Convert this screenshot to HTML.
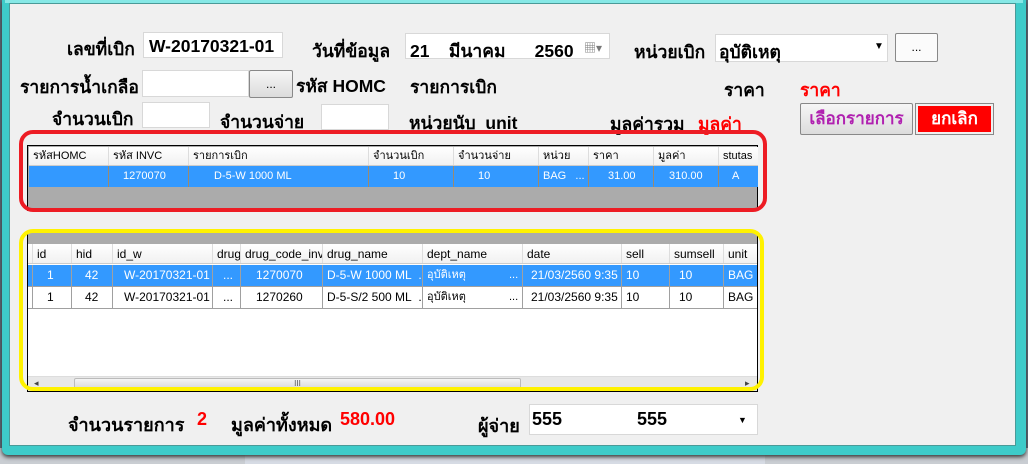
<!DOCTYPE html>
<html><head><meta charset="utf-8"><style>
*{margin:0;padding:0;box-sizing:border-box}
body{width:1028px;height:464px;overflow:hidden;background:#5a6b78;position:relative;font-family:"Liberation Sans","Noto Sans CJK SC",sans-serif}
.a{position:absolute;white-space:nowrap}
.th{font-family:"Liberation Sans","Noto Sans CJK SC",sans-serif;font-weight:bold;font-size:17.5px;color:#000}
.box{position:absolute;background:#fff;border:1px solid #d8d8d8}
.btn{position:absolute;border:1px solid #888;border-radius:2px;background:linear-gradient(#f6f6f6,#dcdcdc);text-align:center;font-size:12px}
.g{font-size:11px;color:#000}
.cell{position:absolute;top:0;height:100%;border-right:1px solid #a0a0a0;padding-left:4px;line-height:20px;overflow:hidden;white-space:nowrap}
</style></head><body>
<div class="a" style="left:0;top:448px;width:1028px;height:16px;background:#c9cdd2"></div>
<div class="a" style="left:245px;top:448px;width:520px;height:16px;background:#d6dbe4"></div>
<div class="a" style="left:2px;top:0;width:1024px;height:455px;background:#3ecbc9;border-radius:0 0 6px 6px;box-shadow:0 2px 4px #333"></div>
<div class="a" style="left:5px;top:0;width:1018px;height:3px;background:#86e8e6"></div>
<div class="a" style="left:9px;top:3px;width:1007px;height:443px;background:#f0f0f0;border:1px solid #4a9a98"></div>

<div class="a th" style="left:67px;top:35px">เลขที่เบิก</div>
<div class="box" style="left:143px;top:32px;width:140px;height:26px"><span class="a th" style="left:5px;top:3px">W-20170321-01</span></div>
<div class="a th" style="left:312px;top:37px">วันที่ข้อมูล</div>
<div class="box" style="left:405px;top:33px;width:205px;height:26px"><span class="a th" style="left:4px;top:3px">21&nbsp;&nbsp;&nbsp; มีนาคม&nbsp;&nbsp;&nbsp;&nbsp;&nbsp; 2560</span><span class="a" style="left:178px;top:5px;font-size:12px;color:#777">▦▾</span></div>
<div class="a th" style="left:634px;top:38px">หน่วยเบิก</div>
<div class="box" style="left:715px;top:34px;width:173px;height:28px"><span class="a th" style="left:3px;top:3px">อุบัติเหตุ</span><span class="a" style="left:158px;top:6px;font-size:10px">▼</span></div>
<div class="btn" style="left:895px;top:33px;width:43px;height:29px;line-height:26px;background:#fbfbfb">...</div>

<div class="a th" style="left:20px;top:73px">รายการน้ำเกลือ</div>
<div class="box" style="left:142px;top:70px;width:107px;height:27px"></div>
<div class="btn" style="left:249px;top:70px;width:44px;height:28px;line-height:26px">...</div>
<div class="a th" style="left:296px;top:72px">รหัส HOMC</div>
<div class="a th" style="left:410px;top:73px">รายการเบิก</div>
<div class="a th" style="left:724px;top:76px">ราคา</div>
<div class="a th" style="left:800px;top:76px;color:#f00">ราคา</div>

<div class="a th" style="left:52px;top:105px">จำนวนเบิก</div>
<div class="box" style="left:142px;top:102px;width:68px;height:26px"></div>
<div class="a th" style="left:220px;top:108px">จำนวนจ่าย</div>
<div class="box" style="left:321px;top:104px;width:68px;height:26px"></div>
<div class="a th" style="left:409px;top:109px">หน่วยนับ&nbsp; unit</div>
<div class="a th" style="left:610px;top:110px">มูลค่ารวม</div>
<div class="a th" style="left:698px;top:110px;color:#f00">มูลค่า</div>
<div class="btn" style="left:800px;top:103px;width:113px;height:32px;line-height:30px;font-size:17px;font-weight:bold;color:#b021b0">เลือกรายการ</div>
<div class="a" style="left:915px;top:103px;width:79px;height:32px;border:1px solid #888;padding:2px;background:#f0f0f0"><div style="background:#f00;color:#fff;height:100%;text-align:center;font-weight:bold;font-size:17px;line-height:26px">ยกเลิก</div></div>

<!-- grid1 -->
<div class="a" style="left:27px;top:145px;width:731px;height:66px;border:1px solid #000;background:#ababab">
 <div class="a g" style="left:1px;top:1px;width:729px;height:19px;background:linear-gradient(#fff,#f1f1f1);border-bottom:1px solid #ccc">
  <div class="cell" style="left:0;width:80px;line-height:18px;border-color:#ddd">รหัสHOMC</div>
  <div class="cell" style="left:80px;width:80px;line-height:18px;border-color:#ddd">รหัส INVC</div>
  <div class="cell" style="left:160px;width:180px;line-height:18px;border-color:#ddd">รายการเบิก</div>
  <div class="cell" style="left:340px;width:85px;line-height:18px;border-color:#ddd">จำนวนเบิก</div>
  <div class="cell" style="left:425px;width:85px;line-height:18px;border-color:#ddd">จำนวนจ่าย</div>
  <div class="cell" style="left:510px;width:50px;line-height:18px;border-color:#ddd">หน่วย</div>
  <div class="cell" style="left:560px;width:65px;line-height:18px;border-color:#ddd">ราคา</div>
  <div class="cell" style="left:625px;width:65px;line-height:18px;border-color:#ddd">มูลค่า</div>
  <div class="cell" style="left:690px;width:39px;line-height:18px;border:none">stutas</div>
 </div>
 <div class="a g" style="left:1px;top:20px;width:729px;height:21px;background:#3399ff;color:#fff">
  <div class="cell" style="left:0;width:80px;border-color:#9a8a70"></div>
  <div class="cell" style="left:80px;width:80px;padding-left:14px;border-color:#9a8a70">1270070</div>
  <div class="cell" style="left:160px;width:180px;padding-left:25px;border-color:#9a8a70">D-5-W 1000 ML</div>
  <div class="cell" style="left:340px;width:85px;padding-left:24px;border-color:#9a8a70">10</div>
  <div class="cell" style="left:425px;width:85px;padding-left:24px;border-color:#9a8a70">10</div>
  <div class="cell" style="left:510px;width:50px;border-color:#9a8a70">BAG&nbsp;&nbsp; ...</div>
  <div class="cell" style="left:560px;width:65px;padding-left:19px;border-color:#9a8a70">31.00</div>
  <div class="cell" style="left:625px;width:65px;padding-left:15px;border-color:#9a8a70">310.00</div>
  <div class="cell" style="left:690px;width:39px;padding-left:13px;border:none">A</div>
 </div>
</div>
<div class="a" style="left:19px;top:130px;width:748px;height:82px;border:4px solid #ed1c24;border-radius:14px"></div>

<!-- grid2 -->
<div class="a" style="left:27px;top:232px;width:731px;height:160px;border:1px solid #000;background:#fff">
 <div class="a" style="left:0;top:0;width:729px;height:11px;background:#ababab"></div>
 <div class="a g" style="left:0;top:11px;width:729px;height:20px;background:linear-gradient(#fff,#f1f1f1);border-bottom:1px solid #ccc;font-size:12px">
  <div class="cell" style="left:0;width:5px;border-color:#ddd"></div>
  <div class="cell" style="left:5px;width:39px;border-color:#ddd">id</div>
  <div class="cell" style="left:44px;width:41px;border-color:#ddd">hid</div>
  <div class="cell" style="left:85px;width:100px;border-color:#ddd">id_w</div>
  <div class="cell" style="left:185px;width:28px;border-color:#ddd">drug</div>
  <div class="cell" style="left:213px;width:82px;border-color:#ddd">drug_code_invc</div>
  <div class="cell" style="left:295px;width:100px;border-color:#ddd">drug_name</div>
  <div class="cell" style="left:395px;width:100px;border-color:#ddd">dept_name</div>
  <div class="cell" style="left:495px;width:99px;border-color:#ddd">date</div>
  <div class="cell" style="left:594px;width:48px;border-color:#ddd">sell</div>
  <div class="cell" style="left:642px;width:54px;border-color:#ddd">sumsell</div>
  <div class="cell" style="left:696px;width:33px;border:none">unit</div>
 </div>
 <div class="a g" style="left:0;top:32px;width:729px;height:22px;background:#3399ff;color:#fff;border-bottom:1px solid #a0a0a0;font-size:12px">
  <div class="cell" style="left:0;width:5px"></div>
  <div class="cell" style="left:5px;width:39px;padding-left:14px">1</div>
  <div class="cell" style="left:44px;width:41px;padding-left:13px">42</div>
  <div class="cell" style="left:85px;width:100px;padding-left:11px">W-20170321-01</div>
  <div class="cell" style="left:185px;width:28px;padding-left:10px">...</div>
  <div class="cell" style="left:213px;width:82px;padding-left:15px">1270070</div>
  <div class="cell" style="left:295px;width:100px">D-5-W 1000 ML&nbsp; ...</div>
  <div class="cell" style="left:395px;width:100px;font-size:11px">อุบัติเหตุ<span style="position:absolute;left:86px">...</span></div>
  <div class="cell" style="left:495px;width:99px;padding-left:8px">21/03/2560 9:35</div>
  <div class="cell" style="left:594px;width:48px">10</div>
  <div class="cell" style="left:642px;width:54px;padding-left:9px">10</div>
  <div class="cell" style="left:696px;width:33px;border:none">BAG</div>
 </div>
 <div class="a g" style="left:0;top:54px;width:729px;height:22px;border-bottom:1px solid #a0a0a0;font-size:12px">
  <div class="cell" style="left:0;width:5px"></div>
  <div class="cell" style="left:5px;width:39px;padding-left:14px">1</div>
  <div class="cell" style="left:44px;width:41px;padding-left:13px">42</div>
  <div class="cell" style="left:85px;width:100px;padding-left:11px">W-20170321-01</div>
  <div class="cell" style="left:185px;width:28px;padding-left:10px">...</div>
  <div class="cell" style="left:213px;width:82px;padding-left:15px">1270260</div>
  <div class="cell" style="left:295px;width:100px">D-5-S/2 500 ML&nbsp; ...</div>
  <div class="cell" style="left:395px;width:100px;font-size:11px">อุบัติเหตุ<span style="position:absolute;left:86px">...</span></div>
  <div class="cell" style="left:495px;width:99px;padding-left:8px">21/03/2560 9:35</div>
  <div class="cell" style="left:594px;width:48px">10</div>
  <div class="cell" style="left:642px;width:54px;padding-left:9px">10</div>
  <div class="cell" style="left:696px;width:33px;border:none">BAG</div>
 </div>
 <div class="a" style="left:0;top:143px;width:729px;height:15px;background:#e8e8e8;border-top:1px solid #ddd">
  <span class="a" style="left:6px;top:1px;font-size:9px;color:#444">◂</span>
  <div class="a" style="left:46px;top:1px;width:447px;height:12px;background:linear-gradient(#f4f4f4,#d8d8d8);border:1px solid #bbb;border-radius:2px;text-align:center;font-size:8px;line-height:10px;color:#555">III</div>
  <span class="a" style="left:717px;top:1px;font-size:9px;color:#444">▸</span>
 </div>
</div>
<div class="a" style="left:19px;top:229px;width:745px;height:162px;border:4px solid #fff200;border-radius:14px"></div>

<div class="a th" style="left:68px;top:410px;font-size:18px">จำนวนรายการ</div>
<div class="a th" style="left:197px;top:409px;color:#f00;font-size:18px">2</div>
<div class="a th" style="left:231px;top:410px;font-size:18px">มูลค่าทั้งหมด</div>
<div class="a th" style="left:340px;top:409px;color:#f00;font-size:18px">580.00</div>
<div class="a th" style="left:478px;top:411px;font-size:18px">ผู้จ่าย</div>
<div class="box" style="left:529px;top:404px;width:229px;height:31px"><span class="a th" style="left:2px;top:4px;font-size:18px">555</span><span class="a th" style="left:107px;top:4px;font-size:18px">555</span><span class="a" style="left:208px;top:10px;font-size:9px">▼</span></div>
</body></html>
